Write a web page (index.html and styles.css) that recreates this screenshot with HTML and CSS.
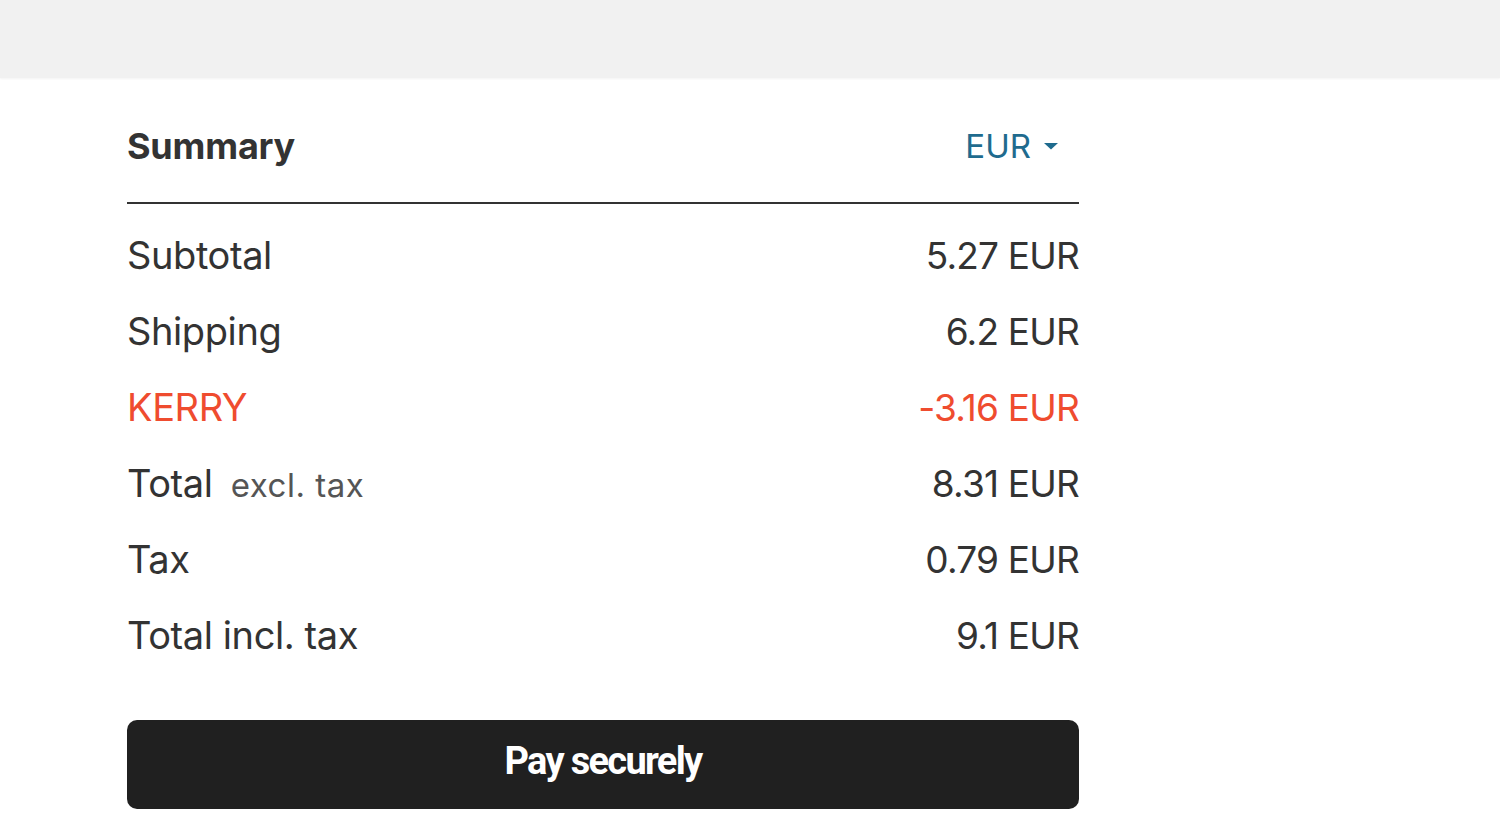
FILE: index.html
```html
<!DOCTYPE html>
<html>
<head>
<meta charset="utf-8">
<link rel="stylesheet" href="styles.css">
</head>
<body>
<header class="topbar"></header>
<main class="summary">
  <div class="summary-head">
    <h2 class="title">Summary</h2>
    <button class="currency">EUR <svg class="caret" width="16" height="8" viewBox="0 0 16 8"><path d="M1 1h14L8 7.5z" fill="#1f6b8e"/></svg></button>
  </div>
  <div class="rows">
    <div class="row"><span class="label">Subtotal</span><span class="amount">5.27 EUR</span></div>
    <div class="row"><span class="label">Shipping</span><span class="amount">6.2 EUR</span></div>
    <div class="row discount"><span class="label">KERRY</span><span class="amount">-3.16 EUR</span></div>
    <div class="row"><span class="label">Total <small class="note">excl. tax</small></span><span class="amount">8.31 EUR</span></div>
    <div class="row"><span class="label">Tax</span><span class="amount">0.79 EUR</span></div>
    <div class="row"><span class="label">Total incl. tax</span><span class="amount">9.1 EUR</span></div>
  </div>
  <button class="pay">Pay securely</button>
</main>
</body>
</html>
```
FILE: styles.css
```css
html, body { margin: 0; padding: 0; background: #fff; }
body { font-family: Inter, "Noto Sans", sans-serif; color: #333; }
.topbar { height: 78px; background: #f1f1f1; box-shadow: 0 1px 2px rgba(0,0,0,0.05); }
.summary { width: 952px; margin-left: 127px; }
.summary-head { display: flex; justify-content: space-between; align-items: center; height: 126px; border-bottom: 2px solid #333; box-sizing: border-box; padding-top: 12px; }
.title { margin: 0; font-size: 36px; font-weight: 700; color: #333; letter-spacing: -0.2px; }
.currency { border: 0; background: none; padding: 0 20px 0 0; font-family: inherit; font-size: 33px; color: #1f6b8e; display: flex; align-items: center; gap: 12px; }
.rows { padding-top: 13px; }
.row { display: flex; justify-content: space-between; align-items: baseline; height: 76px; line-height: 76px; color: #333; }
.label { font-size: 38px; letter-spacing: -0.4px; }
.amount { font-size: 37px; letter-spacing: -0.8px; }
.row.discount { color: #ef4c2f; }
.note { font-size: 33px; color: #555; margin-left: 8px; letter-spacing: 0.5px; }
.pay { display: block; width: 952px; height: 89px; margin-top: 47px; background: #202020; color: #fff; border: 0; border-radius: 10px; font-family: "Roboto", sans-serif; font-size: 38px; font-weight: 700; letter-spacing: -1.7px; padding-bottom: 8px; }
```
